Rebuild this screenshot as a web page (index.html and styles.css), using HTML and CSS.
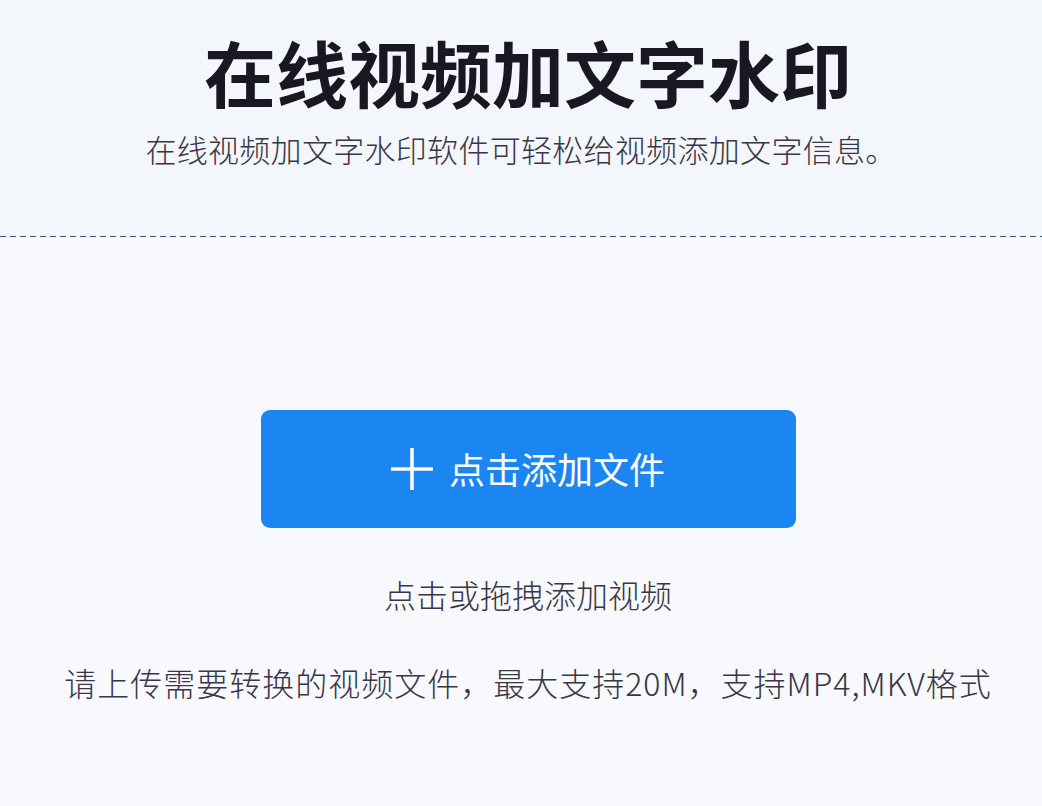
FILE: index.html
```html
<!DOCTYPE html>
<html lang="zh-CN">

<head>
    <meta charset="UTF-8">
    <meta name="viewport" content="width=device-width, initial-scale=1.0">
    <title>在线视频加文字水印</title>
    <link rel="stylesheet" href="styles.css">
</head>

<body>
    <div class="header">
        <h1 class="title">在线视频加文字水印</h1>
        <p class="desc">在线视频加文字水印软件可轻松给视频添加文字信息。</p>
    </div>
    <div class="divider"></div>
    <div class="upload">
        <a href="javascript:;" class="addbtn">
            <svg class="plus" width="42" height="42" viewBox="0 0 42 42">
                <path d="M21 0V42M0 21H42" stroke="#fff" stroke-width="3.5" fill="none" />
            </svg>
            <span>点击添加文件</span>
        </a>
        <p class="tip">点击或拖拽添加视频</p>
        <p class="note">请上传需要转换的视频文件，最大支持20M，支持MP4,MKV格式</p>
    </div>
</body>

</html>
```

FILE: styles.css
```css
* {
    margin: 0px;
    padding: 0px;
}

body {
    background-color: #f8f9fc;
    font-family: "Noto Sans CJK SC", "Noto Sans", sans-serif;
    color: #2e2a3a;
}

.header {
    height: 236px;
    background-color: #f3f6fb;
    display: flex;
    flex-direction: column;
    align-items: center;
    padding-top: 35px;
    box-sizing: border-box;
}

.header .title {
    font-size: 72px;
    line-height: 72px;
    font-weight: 700;
    color: #1a1622;
    margin-left: 14px;
}

.header .desc {
    margin-top: 22px;
    font-size: 31px;
    line-height: 40px;
    font-weight: 300;
    letter-spacing: 0.3px;
    color: #3a3548;
}

.divider {
    height: 1px;
    background: repeating-linear-gradient(90deg, #3c5a78 0px, #3c5a78 6px, transparent 6px, transparent 10px);
}

.upload {
    display: flex;
    flex-direction: column;
    align-items: center;
    padding-top: 173px;
    padding-left: 14px;
}

.upload .addbtn {
    width: 535px;
    height: 118px;
    border-radius: 9px;
    background-color: #1b86f1;
    display: flex;
    align-items: center;
    justify-content: center;
    gap: 16px;
    text-decoration: none;
    color: #fff;
    font-size: 36px;
}

.upload .addbtn span {
    line-height: 40px;
    margin-bottom: 3px;
}

.upload .tip {
    margin-top: 46px;
    font-size: 32px;
    line-height: 40px;
    font-weight: 300;
    color: #3a3548;
}

.upload .note {
    margin-top: 48px;
    font-size: 32px;
    line-height: 40px;
    font-weight: 300;
    letter-spacing: 1px;
    color: #3a3548;
}
```
